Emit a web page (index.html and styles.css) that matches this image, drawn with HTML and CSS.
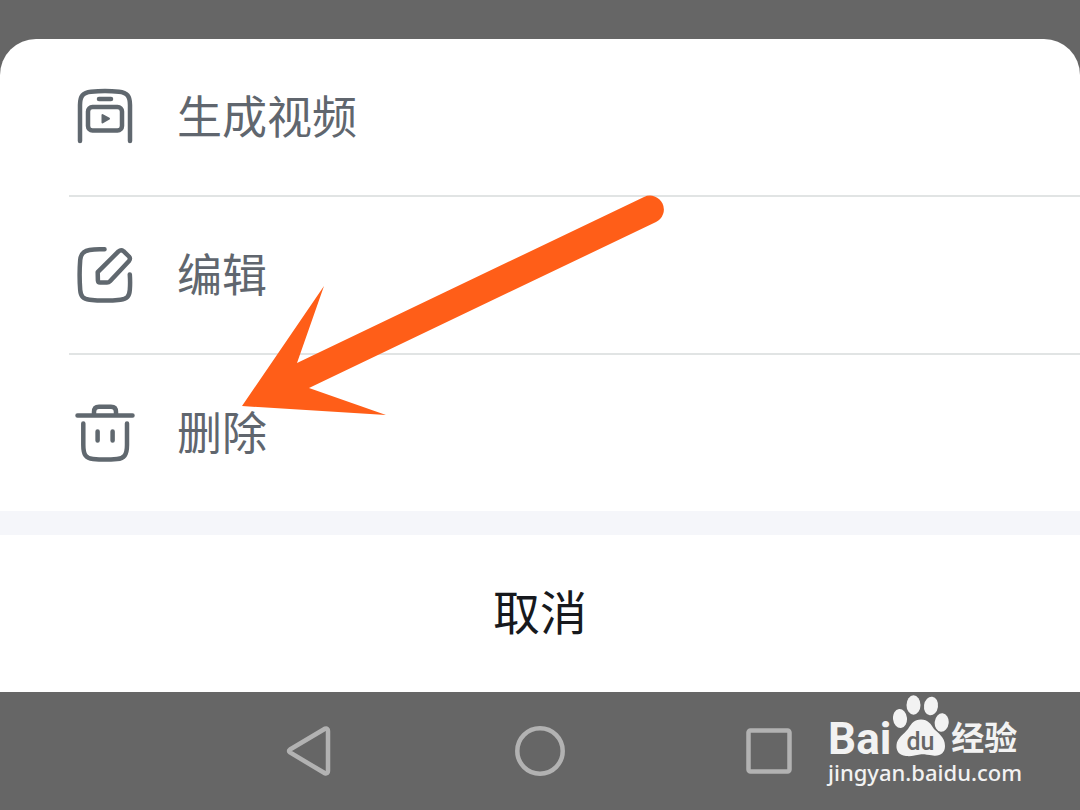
FILE: index.html
```
<!DOCTYPE html>
<html lang="zh-CN">
<head>
<meta charset="utf-8">
<meta name="viewport" content="width=device-width, initial-scale=1">
<title>操作菜单</title>
<link rel="stylesheet" href="styles.css">
</head>
<body>
<div class="screen">
  <main class="sheet">
    <ul class="actions">
      <li class="action-item">
        <button class="action" type="button">
          <svg class="action-icon" viewBox="0 0 60 60" aria-hidden="true">
            <path d="M5 54V18C5 9 8 5.500 16 4.700Q30 3.300 44 4.700C52 5.500 55 9 55 18V54M24 12H36"/>
            <rect x="13" y="20" width="34" height="23.500" rx="4.500"/>
            <path class="solid" d="M27.500 28V35.500L34 31.700Z"/>
          </svg>
          <span class="action-label">生成视频</span>
        </button>
      </li>
      <li class="action-item">
        <button class="action" type="button">
          <svg class="action-icon" viewBox="0 0 60 60" aria-hidden="true">
            <path d="M29.500 4.300C24 4 18 4.300 14.500 5C8 6.200 5.800 9 5.200 15C4.500 24 4.500 36 5.200 45C5.800 51.500 8 54 14.500 54.700C24 55.800 36 55.800 45.500 54.700C52 54 54.300 51.500 54.800 45C55.200 40 55.200 35 54.800 29.500"/>
            <path d="M22.700 27.200L43.500 6.400Q46 4.300 48.500 6.200L54 11.500Q55.800 13.500 54 16L35 36.300Q33.800 37.600 32 37.600H25Q23 37.600 22.900 35.500Z"/>
          </svg>
          <span class="action-label">编辑</span>
        </button>
      </li>
      <li class="action-item">
        <button class="action" type="button">
          <svg class="action-icon" viewBox="0 0 60 60" aria-hidden="true">
            <path d="M2.500 12.500H57.500M19 12V9Q19 3.800 24 3.800H36Q41 3.800 41 9V12M8.300 20.500V42C8.300 52 11 55.500 18 56Q30 57.200 42 56C49 55.500 52 52 52 42V20.500M22.600 28.500V37.500M37.600 28.500V37.500"/>
          </svg>
          <span class="action-label">删除</span>
        </button>
      </li>
    </ul>
    <button class="cancel" type="button">取消</button>
    <svg class="arrow" viewBox="0 0 424 222" aria-hidden="true">
      <path d="M0 210L82 90L55 167L402 1A13.700 13.700 0 0 1 414 26L67 192L144 219Z"/>
    </svg>
  </main>
  <nav class="navbar">
    <button class="nav-button" type="button" aria-label="返回">
      <svg viewBox="0 0 50 50"><path d="M5 23.500L40 2.700Q43 2 43 5V45Q43 48 40 47.300L5 26.500Q3 25 5 23.500Z"/></svg>
    </button>
    <button class="nav-button" type="button" aria-label="主页">
      <svg viewBox="0 0 50 50"><circle cx="25" cy="25" r="22.700"/></svg>
    </button>
    <button class="nav-button" type="button" aria-label="最近任务">
      <svg viewBox="0 0 50 50"><rect x="3.500" y="4.500" width="41" height="41" rx="2"/></svg>
    </button>
    <div class="watermark">
      <div class="brand">
        <span class="brand-latin">Bai</span>
        <svg class="paw" viewBox="0 0 56 62" aria-hidden="true">
          <ellipse cx="20.500" cy="10" rx="7" ry="9.700"/>
          <ellipse cx="38" cy="11" rx="7" ry="9.400" transform="rotate(8 38 11)"/>
          <ellipse cx="7" cy="23.500" rx="7" ry="9.500" transform="rotate(-6 7 23.500)"/>
          <ellipse cx="48.700" cy="27.500" rx="7" ry="9.300" transform="rotate(6 48.700 27.500)"/>
          <path d="M28 24.500C35 24.500 38 29 41 34C45 38 52 42 52 51C52 58 47 61.500 40 60.500C34 60 31 59 27 59.500C22 60 19 61.700 13 61C6 60 3 56 3.500 50C4 43 11 39 15 34C19 28 21 24.500 28 24.500Z"/>
          <text class="paw-text" x="27.500" y="55" text-anchor="middle">du</text>
        </svg>
        <span class="brand-cjk">经验</span>
      </div>
      <div class="site">jingyan.baidu.com</div>
    </div>
  </nav>
</div>
</body>
</html>
```
FILE: styles.css
```
* {
  box-sizing: border-box;
}

body {
  margin: 0;
  background: #666;
  font-family: "Noto Sans CJK SC", sans-serif;
}

button {
  margin: 0;
  padding: 0;
  border: 0;
  background: none;
  font: inherit;
  color: inherit;
  cursor: pointer;
}

.screen {
  display: flex;
  flex-direction: column;
  min-height: 100vh;
  padding-top: 39px;
}

.sheet {
  position: relative;
  background: #fff;
  border-radius: 36px 36px 0 0;
}

.actions {
  margin: 0;
  padding: 0 0 0 69px;
  list-style: none;
  border-bottom: 24px solid #f5f6fa;
}

.action-item + .action-item {
  border-top: 2px solid #e1e4e4;
}

.action {
  display: flex;
  align-items: center;
  gap: 42px;
  width: 100%;
  padding: 48px 6px;
  color: #60666e;
  font-size: 45px;
  line-height: 56px;
}

.action-label {
  padding-bottom: 4px;
}

.action-icon {
  width: 60px;
  height: 60px;
  fill: none;
  stroke: #60686f;
  stroke-width: 4.5;
  stroke-linecap: round;
  stroke-linejoin: round;
}

.action-icon .solid {
  fill: #60686f;
  stroke-width: 2;
}

.cancel {
  display: block;
  width: 100%;
  padding: 45px 0 52px;
  color: #17191d;
  font-size: 47px;
  line-height: 60px;
}

.arrow {
  position: absolute;
  left: 242px;
  top: 157px;
  width: 424px;
  height: 222px;
  overflow: visible;
  fill: #ff5e18;
  pointer-events: none;
}

.navbar {
  position: relative;
  flex: 1;
  display: flex;
  align-items: center;
  justify-content: center;
  gap: 180px;
  padding: 34px 0;
}

.nav-button svg {
  display: block;
  width: 50px;
  height: 50px;
  fill: none;
  stroke: #b2b2b2;
  stroke-width: 4.5;
}

.watermark {
  position: absolute;
  right: 58px;
  top: 3px;
  color: #f2f2f2;
}

.brand {
  display: flex;
  align-items: flex-end;
  gap: 2px;
  height: 62px;
}

.brand-latin {
  font: bold 44px/36px Roboto, sans-serif;
}

.paw {
  width: 56px;
  height: 62px;
  fill: #f2f2f2;
}

.paw-text {
  fill: #666;
  font: 500 25px Roboto, sans-serif;
}

.brand-cjk {
  font: bold 33px/36px Roboto, "Noto Sans CJK SC", sans-serif;
}

.site {
  font: 500 22px/30px "Noto Sans", sans-serif;
}
```
